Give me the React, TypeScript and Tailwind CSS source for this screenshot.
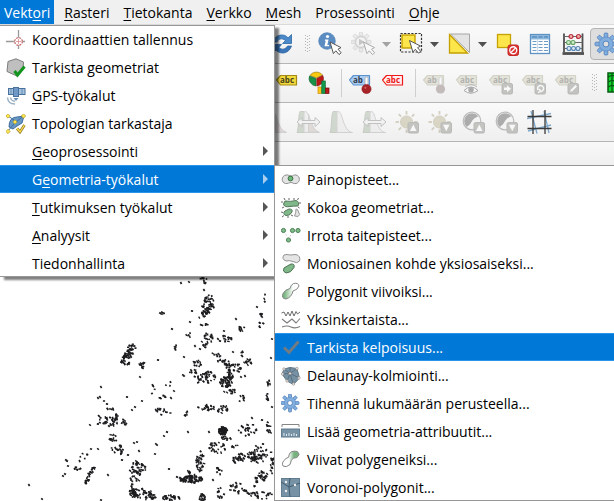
import React, { type ReactNode } from "react";

const INK = "#3a3a3a";

/* ---------- shared drawing parts ---------- */

function ToolSvg({ children, faded = false }: { children: ReactNode; faded?: boolean }) {
  return (
    <svg viewBox="0 0 25 24" className={faded ? "h-6 w-[25px] shrink-0 opacity-45" : "h-6 w-[25px] shrink-0"} aria-hidden="true">
      {children}
    </svg>
  );
}

function MenuSvg({ children }: { children: ReactNode }) {
  return (
    <svg viewBox="0 0 20 20" className="h-5 w-5 shrink-0" aria-hidden="true">
      {children}
    </svg>
  );
}

function Cursor({ x, y }: { x: number; y: number }) {
  return (
    <path
      transform={`translate(${x} ${y})`}
      d="M0 0 L3.4 11.6 L5.8 8.8 L9 12.6 L11.2 10.8 L8 7.2 L11 5.6Z"
      fill="#fff"
      stroke="#555"
      strokeWidth="1"
    />
  );
}

function Tag({ x = 1, y = 4, fill, stroke, color, text = "abc" }: { x?: number; y?: number; fill: string; stroke: string; color: string; text?: string }) {
  return (
    <g transform={`translate(${x} ${y})`}>
      <path d="M0.5 5 L4.5 0.5 H20.5 V10 H4.5Z" fill={fill} stroke={stroke} strokeWidth="1.2" strokeLinejoin="round" />
      <text x="4" y="8" fontSize="8" fontWeight="bold" fontFamily="'Open Sans', sans-serif" fill={color}>
        {text}
      </text>
    </g>
  );
}

function Gear({ cx, cy, r, fill, stroke, hole }: { cx: number; cy: number; r: number; fill: string; stroke: string; hole: string }) {
  return (
    <g>
      {[0, 45, 90, 135, 180, 225, 270, 315].map((a) => (
        <rect key={a} x={cx - r * 0.17} y={cy - r} width={r * 0.34} height={r * 0.5} rx={r * 0.1} fill={fill} stroke={stroke} strokeWidth="0.8" transform={`rotate(${a} ${cx} ${cy})`} />
      ))}
      <circle cx={cx} cy={cy} r={r * 0.64} fill={fill} stroke={stroke} strokeWidth="0.5" />
      <circle cx={cx} cy={cy} r={r * 0.27} fill={hole} stroke={stroke} strokeWidth="0.9" />
    </g>
  );
}

function Badge({ children }: { children: ReactNode }) {
  return (
    <g>
      <rect x="13" y="12.5" width="10.5" height="10.5" rx="1.5" fill="#8a8a84" stroke="#75756f" />
      {children}
    </g>
  );
}

function Thermometer() {
  return (
    <g>
      <rect x="16" y="6" width="3" height="11" rx="1.5" fill="#fff" stroke="#aaa" strokeWidth="0.8" />
      <circle cx="17.5" cy="18" r="4.6" fill="#a82327" stroke="#8a1a1e" strokeWidth="0.6" />
      <circle cx="16.3" cy="16.8" r="1" fill="#d06a6a" />
    </g>
  );
}

/* ---------- toolbar icons ---------- */

const reload = (
  <ToolSvg>
    <path d="M3 10 C5 2 15 1 18 6 L21.500 2.500 V11.500 H12.500 L15.500 8.500 C12 5.500 8 7 7 10Z" fill="#4a8acb" stroke="#2f67a3" strokeWidth="0.8" />
    <path d="M21.500 14 C19 22 10 23 6 18 L3 21.500 V12.500 H11.500 L9 15.500 C12 18.500 16 17 17.500 14Z" fill="#3a76b8" stroke="#2f67a3" strokeWidth="0.8" />
  </ToolSvg>
);

const identify = (
  <ToolSvg>
    <circle cx="9" cy="9" r="8.300" fill="#5b8dc2" stroke="#4379b0" strokeWidth="0.6" />
    <circle cx="9.500" cy="4.500" r="1.600" fill="#fff" />
    <path d="M7 7.500 H10.500 L9.300 13 H11 V14.300 H6.500 L7.700 8.800 H6.800Z" fill="#fff" />
    <Cursor x={12} y={10} />
  </ToolSvg>
);

const action = (
  <ToolSvg faded>
    <Gear cx={10} cy={10} r={10} fill="#dcdcdc" stroke="#b0b0b0" hole="#bbb" />
    <circle cx="10" cy="10" r="5.500" fill="#efefef" stroke="#a2a2a2" strokeWidth="1.300" />
    <path d="M8 6.800 L13.500 10 L8 13.200Z" fill="#8c8c8c" />
    <Cursor x={12.500} y={10} />
  </ToolSvg>
);

const selectArea = (
  <ToolSvg>
    <rect x="1.500" y="1.500" width="21" height="18.500" fill="none" stroke="#333" strokeWidth="1.200" strokeDasharray="2.200 1.400" />
    <rect x="3" y="3" width="13" height="13" fill="#fde64b" stroke="#c4a000" strokeWidth="1.400" />
    <Cursor x={10.500} y={8.500} />
  </ToolSvg>
);

const selectValue = (
  <ToolSvg>
    <path d="M3.500 2 H22.500 V20.500Z" fill="#e4e4e4" stroke="#a5a5a5" />
    <path d="M2.500 2.500 V21 H20.500Z" fill="#fde64b" stroke="#c4a000" strokeWidth="1.300" />
  </ToolSvg>
);

const deselect = (
  <ToolSvg>
    <rect x="2.500" y="2.500" width="13" height="13" fill="#fde64b" stroke="#c4a000" strokeWidth="1.300" />
    <rect x="13" y="13" width="10.500" height="10.500" rx="2" fill="#dc3535" stroke="#c52525" />
    <circle cx="18.250" cy="18.250" r="3.500" fill="none" stroke="#fff" strokeWidth="1.300" />
    <path d="M16 20.500 L20.500 16" stroke="#fff" strokeWidth="1.300" />
  </ToolSvg>
);

const attributeTable = (
  <ToolSvg>
    <rect x="2.500" y="2.500" width="19" height="19" fill="#fff" stroke="#5f92c4" strokeWidth="1.300" />
    <rect x="3" y="3" width="18" height="4.500" fill="#8cb7dd" />
    <path d="M4 5 H9 M10.500 5 H14.500 M16 5 H20" stroke="#417bb2" strokeWidth="1.200" />
    <path d="M4.500 9.500 H8.500 M10.500 9.500 H14.500 M16 9.500 H20 M4.500 12.500 H8.500 M10.500 12.500 H14.500 M16 12.500 H20 M4.500 15.500 H8.500 M10.500 15.500 H14.500 M16 15.500 H20 M4.500 18.500 H8.500 M10.500 18.500 H14.500 M16 18.500 H20" stroke="#6f9cc6" />
    <path d="M9.500 7 V21" stroke="#b4cfe7" strokeWidth="0.7" />
  </ToolSvg>
);

const abacus = (
  <ToolSvg>
    <path d="M3 1.500 V20 M21.500 1.500 V20" stroke="#505050" strokeWidth="1.800" />
    <path d="M1.500 21.500 H23" stroke="#505050" strokeWidth="2.800" />
    <path d="M3 4.500 H21.500 M3 10.500 H21.500 M3 16.500 H21.500" stroke="#666" />
    <g fill="#f3b0b0" stroke="#b92c3a" strokeWidth="1.200"><circle cx="10" cy="4.500" r="2" /><circle cx="17.500" cy="4.500" r="2" /></g>
    <g fill="#d4ebd0" stroke="#63a363" strokeWidth="1.100"><circle cx="7.500" cy="10.500" r="2" /><circle cx="12" cy="10.500" r="2" /></g>
    <g fill="#dbe8f4" stroke="#5585b5" strokeWidth="1.100"><circle cx="8" cy="16.500" r="2" /><circle cx="12.500" cy="16.500" r="2" /><circle cx="17" cy="16.500" r="2" /></g>
  </ToolSvg>
);

const toolbox = (
  <ToolSvg>
    <Gear cx={12} cy={12} r={11} fill="#82aede" stroke="#4a7dbb" hole="#dedede" />
  </ToolSvg>
);

const labelTag = (
  <ToolSvg>
    <Tag fill="#f2d93c" stroke="#a48b17" color="#4a4218" />
  </ToolSvg>
);

const diagram = (
  <ToolSvg>
    <path d="M8.500 7 L2 4.500 A7.500 7 0 0 1 14.500 4Z" fill="#f8cb12" stroke="#8e7412" strokeWidth="0.6" />
    <path d="M8 7.500 V15 A7.500 7.500 0 0 1 1.500 5Z" fill="#199247" stroke="#0d602d" strokeWidth="0.6" />
    <path d="M8.800 7.500 L14.800 4.500 A7.500 7.500 0 0 1 8.800 15Z" fill="#bd1818" stroke="#750e0e" strokeWidth="0.6" />
    <rect x="10" y="16" width="3.500" height="6.500" fill="#ffc51b" stroke="#cb8e0a" strokeWidth="0.7" />
    <rect x="13.800" y="10" width="3.500" height="12.500" fill="#139a4d" stroke="#096a31" strokeWidth="0.7" />
    <rect x="17.500" y="17" width="3.500" height="5.500" fill="#b81919" stroke="#740d0d" strokeWidth="0.7" />
  </ToolSvg>
);

const pinLabel = (
  <ToolSvg>
    <Tag x={0} fill="#a9ccf3" stroke="#5c93cf" color="#303b49" text="ab" />
    <Thermometer />
  </ToolSvg>
);

const redLabel = (
  <ToolSvg>
    <Tag x={0} fill="#fff0f0" stroke="#f01818" color="#ee1515" />
  </ToolSvg>
);

const greyTag = <Tag x={0} fill="#cdcdb8" stroke="#a9a991" color="#5f5f58" />;

const pinGrey = (
  <ToolSvg faded>
    <Tag x={0} fill="#cdcdb8" stroke="#a9a991" color="#5f5f58" text="ab" />
    <rect x="16" y="6" width="3" height="11" rx="1.500" fill="#fff" stroke="#999" strokeWidth="0.8" />
    <circle cx="17.500" cy="18" r="4.600" fill="#8b7777" />
  </ToolSvg>
);

const eyeLabel = (
  <ToolSvg faded>
    {greyTag}
    <path d="M8 19.500 Q15 12.500 22 19.500 Q15 25 8 19.500Z" fill="#fff" stroke="#4d4d4d" />
    <circle cx="15" cy="18.800" r="2.800" fill="#555" />
    <path d="M9 16 Q15 11 21 16" fill="none" stroke="#777" />
  </ToolSvg>
);

const moveLabel = (
  <ToolSvg faded>
    {greyTag}
    <Badge><path d="M15 16.500 H18 V14.300 L22 17.800 L18 21.300 V19 H15Z" fill="#fff" /></Badge>
  </ToolSvg>
);

const rotateLabel = (
  <ToolSvg faded>
    {greyTag}
    <Badge><path d="M16 19 A3 3 0 1 1 19 20.500 M16 21.500 L19 20.500 L17 18" fill="none" stroke="#fff" strokeWidth="1.500" /></Badge>
  </ToolSvg>
);

const editLabel = (
  <ToolSvg faded>
    {greyTag}
    <Badge><path d="M15 21 L16 18.500 L20.500 14 L22 15.500 L17.500 20Z" fill="#fff" /></Badge>
  </ToolSvg>
);

const greenRaster = (
  <ToolSvg>
    <rect x="1" y="2" width="22" height="19" fill="#12d52f" stroke="#075a12" strokeWidth="1.500" />
    <path d="M1 6 Q7 3 12 7 T23 6 M1 11 Q7 8 12 12 T23 10 M1 16 Q7 13 12 17 T23 15 M5 2 V21" fill="none" stroke="#075a12" strokeWidth="1.300" />
  </ToolSvg>
);

function Histogram({ arrow = false, double = false }: { arrow?: boolean; double?: boolean }) {
  return (
    <ToolSvg faded>
      <path d="M1 22.500 C3 18 2 6 4 1.500 H8 L11 7 V22.500Z" fill="#a5b5a0" stroke="#93a08e" />
      <path d="M8 22.500 V2.500 Q10 0 12 4 C15 13 17 22 23.500 22.500Z" fill="#e6e6e6" stroke="#aaa" />
      {double && <path d="M12.500 22 V4 C15 13 18 21 23 22Z" fill="#cdb9b9" stroke="#aaa" />}
      {arrow && <path d="M1 12 L6 7.500 V10.500 H19 V7.500 L24 12 L19 16.500 V13.500 H6 V16.500Z" fill="#f0f0f0" stroke="#858585" />}
    </ToolSvg>
  );
}

function Brightness({ up }: { up: boolean }) {
  return (
    <ToolSvg faded>
      {[0, 45, 90, 135, 180, 225, 270, 315].map((a) => (
        <path key={a} d="M11.500 1 V4.500" stroke="#a8a080" strokeWidth="1.800" transform={`rotate(${a} 11.500 12)`} />
      ))}
      <circle cx="11.500" cy="12" r="6" fill="#bab18e" stroke="#a8a080" />
      <Badge><path d={up ? "M18.300 14.500 L21.500 21 H15Z" : "M15 14.800 H21.500 L18.300 21.300Z"} fill="#fff" /></Badge>
    </ToolSvg>
  );
}

function Contrast({ up }: { up: boolean }) {
  return (
    <ToolSvg faded>
      <circle cx="11" cy="11" r="8.800" fill="#f4f4f4" stroke="#777" strokeWidth="1.200" />
      <path d="M6 16 A7 7 0 0 1 16 6 Q12 7.500 10.500 10.500 Q9 14 6 16Z" fill="#555" stroke="#555" strokeWidth="1.500" />
      <Badge><path d={up ? "M18.300 14.500 L21.500 21 H15Z" : "M15 14.800 H21.500 L18.300 21.300Z"} fill="#fff" /></Badge>
    </ToolSvg>
  );
}

const georeferencer = (
  <ToolSvg>
    <path d="M4 1 L10 23.500 M17 1 L22 23 M0 8.500 L24 3.500 M1 21 L24 15" stroke="#7fa8cd" strokeWidth="1.300" />
    <path d="M6 0 V24 M18 0 V24 M0.500 6.500 H24.500 M0.500 18.500 H24.500" stroke={INK} strokeWidth="1.300" />
  </ToolSvg>
);

/* ---------- toolbar pieces ---------- */

function Tool({ label, children, pressed = false }: { label: string; children: ReactNode; pressed?: boolean }) {
  return (
    <button
      type="button"
      aria-label={label}
      className={
        pressed
          ? "flex h-8 w-[33px] shrink-0 items-center justify-center rounded-sm border border-[#b4b4b4] bg-[#dedede]"
          : "flex h-8 w-[33px] shrink-0 items-center justify-center"
      }
    >
      {children}
    </button>
  );
}

function DropArrow({ label, faded = false }: { label: string; faded?: boolean }) {
  return (
    <button type="button" aria-label={label} className="flex h-8 w-[15px] shrink-0 items-center justify-start">
      <svg viewBox="0 0 9 5" className="ml-0.5 h-[5px] w-[9px]" aria-hidden="true">
        <path d="M0 0 H9 L4.500 5Z" fill={faded ? "#a3a3a3" : "#505050"} />
      </svg>
    </button>
  );
}

function Handle() {
  return (
    <svg viewBox="0 0 5 18" className="mx-1 h-[18px] w-[5px] shrink-0" aria-hidden="true">
      {[0, 3, 6, 9, 12, 15].map((y) => (
        <g key={y} fill="#b5b5b5">
          <rect x="0" y={y} width="1" height="1" />
          <rect x="4" y={y} width="1" height="1" />
          <rect x="2" y={y + 1} width="1" height="1" />
        </g>
      ))}
    </svg>
  );
}

function Divider() {
  return (
    <div className="flex w-2 shrink-0 justify-center">
      <div className="h-7 w-px bg-[#cfcfcf]" />
    </div>
  );
}

function Toolbar({ label, children }: { label: string; children: ReactNode }) {
  return (
    <div role="toolbar" aria-label={label} className="flex h-[39px] items-center overflow-hidden border-b border-[#b5b5b5] bg-linear-to-b from-[#fafafa] to-[#efefef]">
      {children}
    </div>
  );
}

/* ---------- menu icons ---------- */

const coordinateIcon = (
  <MenuSvg>
    <path d="M0 11.500 H9 M15 11.500 H19 M12.500 0 V8 M12.500 15 V19" stroke="#999" strokeWidth="1.300" />
    <circle cx="12.500" cy="11.500" r="3.800" fill="#fff" stroke="#c56565" strokeWidth="1.200" strokeDasharray="2 1" />
    <path d="M10 11.500 H15 M12.500 9 V14" stroke="#d98c8c" strokeWidth="0.8" />
  </MenuSvg>
);
const checkGeometryIcon = (
  <MenuSvg>
    <path d="M2 3.500 L10 0.800 L17.500 4 L17 12 L11 18 L1 13.500Z" fill="#bfbfbf" stroke="#7d7d7d" />
    <path d="M8.500 13 L11.500 17 L18.500 8.500" fill="none" stroke="#12941d" strokeWidth="3" />
  </MenuSvg>
);
const gpsIcon = (
  <MenuSvg>
    <rect x="2.500" y="2.500" width="5" height="6" fill="#a5c2de" stroke="#48729d" />
    <rect x="12.500" y="2.500" width="6.500" height="6" fill="#a5c2de" stroke="#48729d" />
    <path d="M5 3 V9 M16 3 V9" stroke="#48729d" strokeWidth="0.7" />
    <rect x="7.500" y="1.500" width="5" height="9" fill="#6f99c4" stroke="#48729d" />
    <path d="M7.500 12 H12.500 L10 15Z" fill="#6a8fb3" />
    <path d="M1.500 11.500 Q2 18 9 18 M4.500 11.500 Q5 15 9 15.200" fill="none" stroke="#9aaebf" strokeWidth="1.400" />
  </MenuSvg>
);
const topologyIcon = (
  <MenuSvg>
    <path d="M3 13 Q3 3 11 3 L18 2 L16 9 L11 12 L7 15Z" fill="#6797c5" stroke="#3f6d9d" />
    <path d="M2 2 L8 6 M2 17 L8 10 L17 2" fill="none" stroke="#3f6d9d" />
    {[[2, 2], [17.500, 2], [2, 17.500], [9, 8]].map(([x, y]) => (
      <path key={`${x}-${y}`} transform={`translate(${x} ${y})`} d="M0 -2.200 L2.200 0 L0 2.200 L-2.200 0Z" fill="#ffe74f" stroke="#a68c15" strokeWidth="0.6" />
    ))}
    <path d="M11 14.500 L14 18 L18.500 11" fill="none" stroke="#8e7921" strokeWidth="2.700" />
    <path d="M11 14.500 L14 18 L18.500 11" fill="none" stroke="#ffe052" strokeWidth="1.300" />
  </MenuSvg>
);

const centroidIcon = (
  <MenuSvg>
    <path d="M5 5 C8 4.500 8 6 10 6 C12 6 13 4.500 15 5 C19.500 6 19.500 12.500 15 13.500 C12 14 12 12.500 10 12.500 C8 12.500 7 14 4.500 13.500 C0 12.500 0 6 5 5Z" fill="#e4e4e4" stroke="#909090" />
    <circle cx="9.500" cy="8.500" r="2.400" fill="#72b57b" stroke="#387244" />
  </MenuSvg>
);
const collectIcon = (
  <MenuSvg>
    <path d="M3 0 L4 2 M8 0 V2 M13 0 V2 M17.500 0 L16.500 2 M0 4 H2 M18 5 H20 M1 10 L3 9 M18.500 10 L17 9 M0 14 L2 14.500 M1 19 L3 17.500 M7 20 V18 M10 17 L12 18" stroke="#555" strokeWidth="0.9" />
    <path d="M4 3 Q9 4 15 2.500 Q19 4 17 8 Q12 8 9 8.500 Q3 9.500 2.500 6Z" fill="#80b889" stroke="#55775a" />
    <path d="M8 11 Q12 11 11 14 Q9 18 5 17.500 Q1 16 4 13Z" fill="#80b889" stroke="#55775a" />
    <path d="M15 11 Q17 11 17.500 14 Q20 17 17 18.500 L13.500 18 Q15 15 15 11Z" fill="#e5e5e5" stroke="#999" />
  </MenuSvg>
);
const verticesIcon = (
  <MenuSvg>
    <path d="M3 5 L7 12 M8 14 L11 5 H17" fill="none" stroke="#999" strokeWidth="0.7" strokeDasharray="1 3" />
    {[[2.500, 4.500], [11.500, 4.500], [17, 4.500], [7.500, 14]].map(([x, y]) => (
      <circle key={`${x}-${y}`} cx={x} cy={y} r="2.100" fill="#7dbb88" stroke="#42774d" strokeWidth="0.9" />
    ))}
  </MenuSvg>
);
const multipartIcon = (
  <MenuSvg>
    <path d="M3 1 Q6 0 9 1 L15 0.500 Q20 2 18.500 7 Q16 10 12 7.500 Q8 6 5 7 Q0 5 3 1Z" fill="#e5e5e5" stroke="#929292" />
    <path d="M10 10 Q14 9.500 13 13.500 Q10 19 5 19 Q1 17.500 3 14Q6 12 10 10Z" fill="#80b889" stroke="#4b7152" />
  </MenuSvg>
);
const polygonLinesIcon = (
  <MenuSvg>
    <defs><linearGradient id="toLines"><stop offset="0.1" stopColor="#76b37e" /><stop offset="0.65" stopColor="#fff" /></linearGradient></defs>
    <path d="M12.500 1.500 Q17.500 0.500 18 4 Q16.500 8 12 9 Q10.500 15.500 5 17 Q0 16.500 2 11.500 Q4 7.500 9 6.500 Q9.500 3 12.500 1.500Z" fill="url(#toLines)" stroke="#858585" />
  </MenuSvg>
);
const simplifyIcon = (
  <MenuSvg>
    <path d="M0.500 3 L3 2 L5 6 L7 2 L9 6 L11 1 L13 6 L15 1.500 L16.500 4 L19 2" fill="none" stroke="#6c6c6c" strokeWidth="1" />
    <path d="M1 9 L6 13 L11 9 L15 13 L19 8.500 M1 17 Q6 15 10 17 T19 16.500" fill="none" stroke="#7b7b7b" strokeWidth="1.100" />
  </MenuSvg>
);
const validityIcon = (
  <MenuSvg><path d="M3 9.500 L8 14.500 L17.500 3.500" fill="none" stroke="#747b80" strokeWidth="2.800" /></MenuSvg>
);
const delaunayIcon = (
  <MenuSvg>
    <path d="M3 3 L9 1.500 L16 2.500 L18.500 12 L12.500 18.500 L6 15 L1 8Z" fill="#7790a2" stroke="#5f788a" />
    <path d="M3 3 L9 7.500 L16 2.500 M9 1.500 V7.500 L18.500 12 M9 7.500 L12.500 18.500 M9 7.500 L1 8 M9 7.500 L6 15" fill="none" stroke="#4c6578" strokeWidth="0.8" />
    {[[3, 3], [16, 2.500], [9, 7.500], [18, 12], [12.500, 18], [6, 15], [1.500, 8]].map(([x, y]) => (
      <circle key={`${x}-${y}`} cx={x} cy={y} r="1.300" fill="#e8e1dd" stroke="#8c8581" strokeWidth="0.5" />
    ))}
  </MenuSvg>
);
const densifyIcon = (
  <MenuSvg><Gear cx={9} cy={9} r={9} fill="#82aede" stroke="#5986bf" hole="#fff" /></MenuSvg>
);
const measureIcon = (
  <MenuSvg>
    <path d="M1 5 V2.500 H18 V5" fill="none" stroke="#858585" />
    <rect x="0.500" y="7" width="18" height="8" fill="#7993a6" stroke="#5f7b90" />
    <path d="M3 14 V11 M5.500 14 V12 M8 14 V11 M10.500 14 V12 M13 14 V11 M15.500 14 V12" stroke="#e2eaf0" />
  </MenuSvg>
);
const linesPolygonIcon = (
  <MenuSvg>
    <defs><linearGradient id="toPolygon"><stop offset="0.4" stopColor="#fff" /><stop offset="0.7" stopColor="#76b37e" /></linearGradient></defs>
    <path d="M11 1.500 Q17.500 0 18 4.500 Q16.500 8.500 12.500 8 Q10 9.500 9 14.500 Q5 18 2 16 Q0 12.500 5 8.500 Q9 7.500 8 5 Q9 2 11 1.500Z" fill="url(#toPolygon)" stroke="#858585" />
  </MenuSvg>
);
const voronoiIcon = (
  <MenuSvg>
    <rect x="0.500" y="0.500" width="18" height="18" fill="#7892a5" stroke="#607d92" />
    <path d="M9 0 L8 9 L0 4 M8 9 L19 5 M8 9 L9 19" fill="none" stroke="#405b6e" />
    {[[5, 4], [14, 7], [5, 13]].map(([x, y]) => (
      <circle key={`${x}-${y}`} cx={x} cy={y} r="1.200" fill="#eee" />
    ))}
  </MenuSvg>
);

/* ---------- menus ---------- */

type Entry = { pre?: string; key?: string; rest: string; icon?: ReactNode; more?: boolean; active?: boolean; children?: Entry[] };

const menuBar: Entry[] = [
  { pre: "Vekt", key: "o", rest: "ri", active: true },
  { key: "R", rest: "asteri" },
  { key: "T", rest: "ietokanta" },
  { key: "V", rest: "erkko" },
  { key: "M", rest: "esh" },
  { rest: "Prosessointi" },
  { key: "O", rest: "hje" },
];

const geometryTools: Entry[] = [
  { rest: "Painopisteet...", icon: centroidIcon },
  { rest: "Kokoa geometriat...", icon: collectIcon },
  { rest: "Irrota taitepisteet...", icon: verticesIcon },
  { rest: "Moniosainen kohde yksiosaiseksi...", icon: multipartIcon },
  { rest: "Polygonit viivoiksi...", icon: polygonLinesIcon },
  { rest: "Yksinkertaista...", icon: simplifyIcon },
  { rest: "Tarkista kelpoisuus...", icon: validityIcon, active: true },
  { rest: "Delaunay-kolmiointi...", icon: delaunayIcon },
  { rest: "Tihennä lukumäärän perusteella...", icon: densifyIcon },
  { rest: "Lisää geometria-attribuutit...", icon: measureIcon },
  { rest: "Viivat polygeneiksi...", icon: linesPolygonIcon },
  { rest: "Voronoi-polygonit...", icon: voronoiIcon },
];

const vectorMenu: Entry[] = [
  { rest: "Koordinaattien tallennus", icon: coordinateIcon },
  { rest: "Tarkista geometriat", icon: checkGeometryIcon },
  { key: "G", rest: "PS-työkalut", icon: gpsIcon },
  { rest: "Topologian tarkastaja", icon: topologyIcon },
  { key: "G", rest: "eoprosessointi", more: true },
  { pre: "G", key: "e", rest: "ometria-työkalut", more: true, active: true, children: geometryTools },
  { key: "T", rest: "utkimuksen työkalut", more: true },
  { key: "A", rest: "nalyysit", more: true },
  { rest: "Tiedonhallinta", more: true },
];

function Caption({ entry }: { entry: Entry }) {
  return (
    <span className="whitespace-nowrap">
      {entry.pre}
      {entry.key && <span className="underline underline-offset-2">{entry.key}</span>}
      {entry.rest}
    </span>
  );
}

function MenuRow({ entry }: { entry: Entry }) {
  return (
    <li role="none" className="relative">
      <button
        type="button"
        role="menuitem"
        className={
          entry.active
            ? "flex h-7 w-full items-center gap-1.5 border-y border-[#2a93ea] bg-[#0078d7] px-1.5 pt-0.5 text-left text-white"
            : "flex h-7 w-full items-center gap-1.5 border-y border-transparent px-1.5 pt-0.5 text-left text-black"
        }
      >
        <span className="h-5 w-5 shrink-0">{entry.icon}</span>
        <Caption entry={entry} />
        {entry.more && (
          <svg viewBox="0 0 5 10" className="mb-0.5 ml-auto h-2.5 w-[5px]" aria-hidden="true">
            <path d="M0 0 L5 5 L0 10Z" fill={entry.active ? "#a9cdee" : "#555"} />
          </svg>
        )}
      </button>
      {entry.children && (
        <ul role="menu" className="absolute top-0 left-[274px] w-[380px] bg-white pl-px shadow-[inset_0_0_0_1px_#979797]">
          {entry.children.map((child) => (
            <MenuRow key={child.rest} entry={child} />
          ))}
        </ul>
      )}
    </li>
  );
}

/* ---------- building footprints on the map ---------- */

// centre x, centre y, radius x, radius y, number of buildings, rotation in degrees
const clusters: number[][] = [
  [208, 304, 5, 9, 45, 20], [206, 312, 9, 3, 35, -35], [131, 350, 4, 6, 35, 25], [126, 359, 5, 6, 45, 20], [142, 365, 3, 3, 14, 0],
  [208, 341, 6, 8, 28, 0], [227, 339, 5, 4, 18, 0], [242, 329, 3, 3, 12, 0], [261, 315, 2, 3, 6, 0], [261, 325, 3, 3, 7, 0],
  [265, 298, 1, 4, 4, 0], [189, 335, 3, 2, 6, 0], [176, 348, 2, 3, 6, 0], [204, 325, 5, 1, 7, 0], [162, 314, 2, 3, 5, 0],
  [198, 364, 5, 4, 16, 0], [206, 378, 10, 6, 52, -20], [193, 373, 3, 6, 12, 0], [225, 363, 9, 3, 28, 15], [226, 382, 6, 5, 60, -20],
  [229, 371, 9, 2, 36, 65], [237, 368, 4, 4, 18, 0], [248, 362, 4, 3, 14, 0], [217, 355, 5, 2, 9, 20], [242, 354, 1, 3, 5, 0],
  [230, 392, 7, 2, 16, -10], [242, 398, 3, 4, 9, 30], [207, 408, 9, 3, 28, 0], [222, 409, 6, 4, 20, 0], [163, 412, 8, 3, 16, 10],
  [163, 397, 4, 2, 7, 0], [153, 390, 2, 5, 5, 0], [168, 384, 3, 4, 4, 0], [223, 431, 4, 4, 90, 0], [227, 438, 5, 2, 14, 0],
  [248, 430, 9, 6, 28, 0], [269, 427, 3, 7, 14, 0], [268, 386, 2, 10, 9, 0], [267, 399, 1, 6, 7, 0], [217, 448, 8, 6, 34, 0],
  [200, 461, 4, 11, 46, 0], [191, 479, 11, 4, 90, 0], [190, 475, 3, 5, 20, 0], [248, 457, 9, 5, 55, 0], [237, 458, 4, 5, 20, 0],
  [260, 455, 7, 8, 42, 30], [272, 462, 2, 11, 20, 0], [263, 476, 5, 5, 30, 0], [255, 485, 3, 10, 14, 0], [238, 488, 8, 5, 20, 0],
  [220, 493, 4, 5, 14, 0], [220, 471, 3, 4, 9, -40], [262, 495, 11, 5, 24, 0], [143, 494, 13, 5, 75, 10], [138, 468, 8, 7, 52, -15],
  [172, 498, 9, 3, 36, 0], [202, 498, 3, 4, 28, 0], [235, 446, 4, 2, 6, 0], [246, 492, 6, 1, 8, 45], [110, 421, 8, 5, 38, 0],
  [124, 422, 3, 3, 10, 0], [98, 420, 3, 4, 8, 0], [111, 409, 4, 1, 7, 0], [117, 415, 1, 4, 6, 0], [113, 438, 4, 5, 17, 0],
  [117, 450, 6, 5, 24, 0], [90, 475, 9, 2, 34, -62], [134, 490, 5, 7, 28, 0], [76, 469, 6, 2, 9, -10], [83, 457, 3, 7, 8, 30],
  [186, 413, 3, 2, 6, -45], [204, 283, 2, 4, 5, 0], [203, 279, 4, 1, 5, 0], [135, 479, 5, 3, 12, 0],
];

const singles: number[][] = [
  [181, 283], [189, 282], [204, 290], [101, 387], [98, 398], [100, 397], [104, 401], [107, 404], [127, 397], [90, 425], [91, 449], [98, 449],
  [66, 460], [67, 461], [68, 466], [63, 476], [65, 474], [29, 485], [42, 499], [108, 475], [134, 443], [135, 407], [132, 410], [128, 455],
  [101, 500], [122, 460], [140, 377], [158, 360], [183, 375], [184, 376], [172, 329], [190, 322], [192, 311], [236, 319], [257, 307],
  [272, 339], [271, 358], [233, 352], [184, 357], [174, 391], [171, 398], [142, 401], [137, 442], [156, 444], [157, 445], [167, 432],
  [188, 432], [164, 436], [155, 454], [169, 469], [177, 477], [139, 451], [195, 346], [200, 349], [224, 331], [241, 377], [245, 376],
  [252, 418], [262, 420], [272, 407], [256, 446], [263, 444], [218, 339], [220, 341], [249, 494], [213, 480], [209, 432],
];

function footprints(): number[][] {
  let seed = 71;
  const next = () => {
    seed = (seed * 16807) % 2147483647;
    return seed / 2147483647;
  };
  const out: number[][] = [];
  clusters.forEach(([cx, cy, rx, ry, count, turn]) => {
    const a = (turn * Math.PI) / 180;
    for (let i = 0; i < count * 0.72; i++) {
      const t = next() * Math.PI * 2;
      const d = Math.sqrt(next()) * 1.05;
      const x = Math.cos(t) * d * rx;
      const y = Math.sin(t) * d * ry;
      out.push([cx + x * Math.cos(a) - y * Math.sin(a), cy + x * Math.sin(a) + y * Math.cos(a), 1.5 + next() * 1.3, 1.3 + next() * 0.6, next() * 90]);
    }
  });
  singles.forEach(([x, y]) => out.push([x, y, 2.2, 1.7, next() * 60]));
  return out;
}

const buildings = footprints();

function MapCanvas() {
  return (
    <main className="flex-1 bg-white">
      <svg viewBox="0 165 275 336" className="h-[336px] w-[275px]" role="img" aria-label="Kartta">
        {buildings.map(([x, y, w, h, r], i) => (
          <rect key={i} x={x - w / 2} y={y - h / 2} width={w} height={h} fill="#1c1c1f" transform={`rotate(${r} ${x} ${y})`} />
        ))}
      </svg>
    </main>
  );
}

export default function App() {
  return (
    <div className="relative flex min-h-screen flex-col overflow-hidden bg-white font-['Open_Sans','Noto_Sans',sans-serif] text-[14px] leading-5">
      <nav className="h-[25px] border-b border-[#dadada] bg-[#f0f0f0]">
        <ul role="menubar" className="flex h-full">
          {menuBar.map((entry) => (
            <li key={entry.rest} role="none" className="shrink-0 pr-1.5">
              <button type="button" role="menuitem" className={entry.active ? "h-full bg-[#0078d7] px-1 pt-0.5 text-white" : "h-full px-1 pt-0.5 text-black"}>
                <Caption entry={entry} />
              </button>
            </li>
          ))}
        </ul>
      </nav>

      <Toolbar label="Attribuutit">
        <div className="w-[266px] shrink-0" />
        <Tool label="Päivitä">{reload}</Tool>
        <div className="w-0.5 shrink-0" />
        <Handle />
        <Tool label="Kohteen tiedot">{identify}</Tool>
        <Tool label="Suorita toiminto">{action}</Tool>
        <DropArrow label="Toiminnot" faded />
        <Tool label="Valitse kohteet">{selectArea}</Tool>
        <DropArrow label="Valintatavat" />
        <Tool label="Valitse arvolla">{selectValue}</Tool>
        <DropArrow label="Arvovalinnat" />
        <Tool label="Poista valinta">{deselect}</Tool>
        <Tool label="Attribuuttitaulu">{attributeTable}</Tool>
        <Tool label="Kenttälaskin">{abacus}</Tool>
        <Tool label="Työkalut" pressed>{toolbox}</Tool>
      </Toolbar>

      <Toolbar label="Nimiöt">
        <div className="w-[271px] shrink-0" />
        <Tool label="Nimiöt">{labelTag}</Tool>
        <Tool label="Diagrammit">{diagram}</Tool>
        <Divider />
        <Tool label="Korosta kiinnitetyt">{pinLabel}</Tool>
        <Tool label="Sijoittamattomat">{redLabel}</Tool>
        <Divider />
        <Tool label="Kiinnitä nimiö">{pinGrey}</Tool>
        <Tool label="Näytä nimiö">{eyeLabel}</Tool>
        <Tool label="Siirrä nimiö">{moveLabel}</Tool>
        <Tool label="Kierrä nimiö">{rotateLabel}</Tool>
        <Tool label="Muokkaa nimiö">{editLabel}</Tool>
        <div className="w-1 shrink-0" />
        <Handle />
        <div className="w-0.5 shrink-0" />
        <Tool label="Rasteri">{greenRaster}</Tool>
      </Toolbar>

      <Toolbar label="Rasteri">
        <div className="w-[259px] shrink-0" />
        <Tool label="Paikallinen venytys"><Histogram double /></Tool>
        <Tool label="Koko venytys"><Histogram double arrow /></Tool>
        <Tool label="Paikallinen histogrammi"><Histogram /></Tool>
        <Tool label="Koko histogrammi"><Histogram arrow /></Tool>
        <Tool label="Lisää kirkkautta"><Brightness up /></Tool>
        <Tool label="Vähennä kirkkautta"><Brightness up={false} /></Tool>
        <Tool label="Lisää kontrastia"><Contrast up /></Tool>
        <Tool label="Vähennä kontrastia"><Contrast up={false} /></Tool>
        <Tool label="Georeferointi">{georeferencer}</Tool>
      </Toolbar>

      <div className="h-[23px] bg-linear-to-b from-[#f8f8f8] to-[#f0f0f0]" />

      <MapCanvas />

      <ul role="menu" className="absolute top-[25px] left-0 w-[275px] bg-white pr-px shadow-[inset_-1px_-1px_0_#979797,inset_0_1px_0_#979797,4px_3px_2px_rgba(0,0,0,0.5)]">
        {vectorMenu.map((entry) => (
          <MenuRow key={entry.rest} entry={entry} />
        ))}
      </ul>
    </div>
  );
}
